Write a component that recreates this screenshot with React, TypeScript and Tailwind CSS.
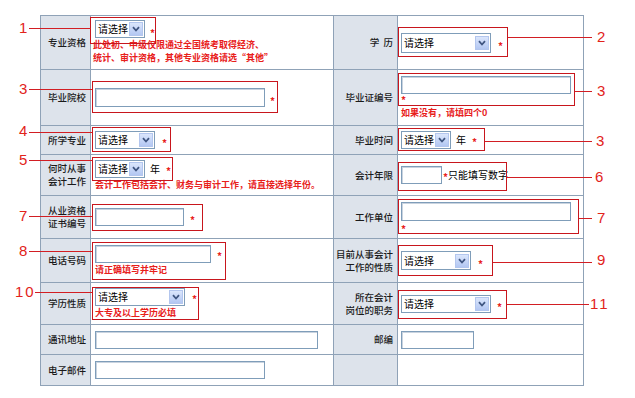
import React from 'react';

const Star = ({ className = '' }: { className?: string }) => (
  <span className={`text-[10px] leading-none font-bold text-[#e8201b] ${className}`}>*</span>
);

const Hint = ({ children, className = '' }: { children: React.ReactNode; className?: string }) => (
  <div className={`text-[9px] font-bold leading-[13px] text-[#e8201b] whitespace-nowrap ${className}`}>{children}</div>
);

const Select = ({ className = '' }: { className?: string }) => (
  <div className={`flex items-center border border-[#7f9db9] bg-white shrink-0 overflow-hidden ${className}`}>
    <span className="pl-[2px] text-[10px] leading-none text-black whitespace-nowrap">请选择</span>
    <span className="ml-auto mr-px w-[14px] h-[14px] shrink-0 flex items-center justify-center border border-[#b3c6ee] bg-gradient-to-b from-[#dbe6fc] to-[#b3c7f2]">
      <svg width="8" height="6" viewBox="0 0 8 6">
        <path d="M1 1.2 L4 4.5 L7 1.2" fill="none" stroke="#3f5580" strokeWidth="1.8" />
      </svg>
    </span>
  </div>
);

const Input = ({ className = '' }: { className?: string }) => (
  <div className={`border border-[#7f9db9] bg-white shadow-[inset_1px_1px_0_#c9d3df] shrink-0 ${className}`} />
);

const Label = ({ children }: { children: React.ReactNode }) => (
  <div className="bg-[#dde3eb] flex items-center justify-end pr-[4px] text-right text-[9.5px] font-medium leading-[13px] text-[#1a1a1a] whitespace-nowrap">
    {children}
  </div>
);

const Cell = ({ children, className = '' }: { children?: React.ReactNode; className?: string }) => (
  <div className={`bg-white flex ${className}`}>{children}</div>
);

export default function App() {
  return (
    <div className="relative w-[635px] h-[398px] bg-white overflow-hidden font-['Noto_Sans_CJK_SC','Noto_Sans',sans-serif]">
      <div className="pt-[15px] pl-[40px]">
        <div className="grid w-[544px] grid-cols-[49px_242px_63px_185px] grid-rows-[53px_55px_28px_40px_42px_43px_41px_29px_30px] gap-px bg-[#8fa2b7] border border-[#8fa2b7]">
          {/* row 1 */}
          <Label>专业资格</Label>
          <Cell className="flex-col pl-[4px] pt-[4px]">
            <div className="flex items-center">
              <Select className="w-[50px] h-[18px]" />
              <Star className="ml-[5px] mt-[7px]" />
            </div>
            <Hint className="-ml-[2px]">
              此处初、中级仅限通过全国统考取得经济、
              <br />
              统计、审计资格，其他专业资格请选“其他”
            </Hint>
          </Cell>
          <Label>学&nbsp;&nbsp;历</Label>
          <Cell className="items-center pl-[3px]">
            <Select className="w-[90px] h-[20px]" />
            <Star className="ml-[7px] mt-[6px]" />
          </Cell>

          {/* row 2 */}
          <Label>毕业院校</Label>
          <Cell className="items-center pl-[4px]">
            <Input className="w-[170px] h-[19px]" />
            <Star className="ml-[5px] mt-[6px]" />
          </Cell>
          <Label>毕业证编号</Label>
          <Cell className="flex-col justify-center pl-[3px]">
            <Input className="w-[170px] h-[18px]" />
            <div className="h-[12px] pt-px flex items-start">
              <Star />
            </div>
            <Hint className="leading-[12px]">如果没有，请填四个0</Hint>
          </Cell>

          {/* row 3 */}
          <Label>所学专业</Label>
          <Cell className="items-center pl-[4px]">
            <Select className="w-[60px] h-[18px]" />
            <Star className="ml-[7px] mt-[5px]" />
          </Cell>
          <Label>毕业时间</Label>
          <Cell className="items-center pl-[3px]">
            <Select className="w-[50px] h-[18px]" />
            <span className="ml-[5px] text-[10px] leading-none">年</span>
            <Star className="ml-[6px] mt-[4px]" />
          </Cell>

          {/* row 4 */}
          <Label>
            何时从事
            <br />
            会计工作
          </Label>
          <Cell className="flex-col pl-[4px] pt-[5px]">
            <div className="flex items-center">
              <Select className="w-[50px] h-[18px]" />
              <span className="ml-[5px] text-[10px] leading-none">年</span>
              <Star className="ml-[6px] mt-[4px]" />
            </div>
            <Hint>会计工作包括会计、财务与审计工作，请直接选择年份。</Hint>
          </Cell>
          <Label>会计年限</Label>
          <Cell className="items-center pl-[3px]">
            <Input className="w-[41px] h-[18px]" />
            <Star className="ml-px mt-[3px]" />
            <span className="text-[10px] leading-none text-black">只能填写数字</span>
          </Cell>

          {/* row 5 */}
          <Label>
            从业资格
            <br />
            证书编号
          </Label>
          <Cell className="items-center pl-[4px]">
            <Input className="w-[89px] h-[18px]" />
            <Star className="ml-[6px] mt-[6px]" />
          </Cell>
          <Label>工作单位</Label>
          <Cell className="flex-col pl-[3px] pt-[6px]">
            <Input className="w-[170px] h-[19px]" />
            <div className="pt-[3px] flex">
              <Star />
            </div>
          </Cell>

          {/* row 6 */}
          <Label>电话号码</Label>
          <Cell className="flex-col pl-[4px] pt-[6px]">
            <div className="flex items-center">
              <Input className="w-[116px] h-[18px]" />
              <Star className="ml-[6px] mt-[4px]" />
            </div>
            <Hint>请正确填写并牢记</Hint>
          </Cell>
          <Label>
            目前从事会计
            <br />
            工作的性质
          </Label>
          <Cell className="items-center pl-[3px]">
            <Select className="w-[70px] h-[19px]" />
            <Star className="ml-[7px] mt-[6px]" />
          </Cell>

          {/* row 7 */}
          <Label>学历性质</Label>
          <Cell className="flex-col pl-[4px] pt-[5px]">
            <div className="flex items-center">
              <Select className="w-[90px] h-[18px]" />
              <Star className="ml-[7px] mt-[4px]" />
            </div>
            <Hint>大专及以上学历必填</Hint>
          </Cell>
          <Label>
            所在会计
            <br />
            岗位的职务
          </Label>
          <Cell className="items-center pl-[3px]">
            <Select className="w-[90px] h-[18px]" />
            <Star className="ml-[6px] mt-[6px]" />
          </Cell>

          {/* row 8 */}
          <Label>通讯地址</Label>
          <Cell className="items-center pl-[4px]">
            <Input className="w-[223px] h-[18px]" />
          </Cell>
          <Label>邮编</Label>
          <Cell className="items-center pl-[3px]">
            <Input className="w-[73px] h-[18px]" />
          </Cell>

          {/* row 9 */}
          <Label>电子邮件</Label>
          <Cell className="items-center pl-[4px]">
            <Input className="w-[170px] h-[18px]" />
          </Cell>
          <Label>{''}</Label>
          <Cell />
        </div>
      </div>

      {/* annotation overlay: red boxes */}
      <div className="absolute left-[90px] top-[17px] w-[66px] h-[27px] border border-[#c8161d]" />
      <div className="absolute left-[92px] top-[81px] w-[186px] h-[32px] border border-[#c8161d]" />
      <div className="absolute left-[92px] top-[127px] w-[79px] h-[25px] border border-[#c8161d]" />
      <div className="absolute left-[92px] top-[157px] w-[81px] h-[24px] border border-[#c8161d]" />
      <div className="absolute left-[92px] top-[204px] w-[111px] h-[27px] border border-[#c8161d]" />
      <div className="absolute left-[92px] top-[242px] w-[134px] h-[38px] border border-[#c8161d]" />
      <div className="absolute left-[92px] top-[287px] w-[107px] h-[33px] border border-[#c8161d]" />
      <div className="absolute left-[398px] top-[27px] w-[110px] h-[30px] border border-[#c8161d]" />
      <div className="absolute left-[398px] top-[73px] w-[177px] h-[33px] border border-[#c8161d]" />
      <div className="absolute left-[398px] top-[128px] w-[87px] h-[23px] border border-[#c8161d]" />
      <div className="absolute left-[398px] top-[162px] w-[109px] h-[29px] border border-[#c8161d]" />
      <div className="absolute left-[398px] top-[199px] w-[181px] h-[35px] border border-[#c8161d]" />
      <div className="absolute left-[398px] top-[245px] w-[95px] h-[31px] border border-[#c8161d]" />
      <div className="absolute left-[398px] top-[290px] w-[109px] h-[29px] border border-[#c8161d]" />

      {/* annotation overlay: leader lines */}
      <div className="absolute left-[29px] top-[28px] w-[62px] h-px bg-[#d21e23]" />
      <div className="absolute left-[29px] top-[89px] w-[63px] h-px bg-[#d21e23]" />
      <div className="absolute left-[29px] top-[132px] w-[63px] h-px bg-[#d21e23]" />
      <div className="absolute left-[29px] top-[160px] w-[63px] h-px bg-[#d21e23]" />
      <div className="absolute left-[29px] top-[216px] w-[63px] h-px bg-[#d21e23]" />
      <div className="absolute left-[29px] top-[251px] w-[63px] h-px bg-[#d21e23]" />
      <div className="absolute left-[35px] top-[292px] w-[57px] h-px bg-[#d21e23]" />
      <div className="absolute left-[508px] top-[37px] w-[84px] h-px bg-[#d21e23]" />
      <div className="absolute left-[575px] top-[91px] w-[17px] h-px bg-[#d21e23]" />
      <div className="absolute left-[485px] top-[141px] w-[107px] h-px bg-[#d21e23]" />
      <div className="absolute left-[507px] top-[177px] w-[85px] h-px bg-[#d21e23]" />
      <div className="absolute left-[579px] top-[218px] w-[13px] h-px bg-[#d21e23]" />
      <div className="absolute left-[493px] top-[262px] w-[99px] h-px bg-[#d21e23]" />
      <div className="absolute left-[507px] top-[304px] w-[82px] h-px bg-[#d21e23]" />

      {/* annotation overlay: numbers */}
      <div className="absolute inset-0 font-['Liberation_Sans',Arial,sans-serif] text-[15px] leading-none text-[#e2231a]">
        <span className="absolute left-[19px] top-[20px]">1</span>
        <span className="absolute left-[19px] top-[81px]">3</span>
        <span className="absolute left-[19px] top-[123px]">4</span>
        <span className="absolute left-[19px] top-[152px]">5</span>
        <span className="absolute left-[19px] top-[208px]">7</span>
        <span className="absolute left-[19px] top-[243px]">8</span>
        <span className="absolute left-[15px] top-[284px] tracking-[2px]">10</span>
        <span className="absolute left-[597px] top-[29px]">2</span>
        <span className="absolute left-[597px] top-[83px]">3</span>
        <span className="absolute left-[596px] top-[133px]">3</span>
        <span className="absolute left-[595px] top-[169px]">6</span>
        <span className="absolute left-[597px] top-[210px]">7</span>
        <span className="absolute left-[597px] top-[252px]">9</span>
        <span className="absolute left-[590px] top-[296px] tracking-[2px]">11</span>
      </div>
    </div>
  );
}
